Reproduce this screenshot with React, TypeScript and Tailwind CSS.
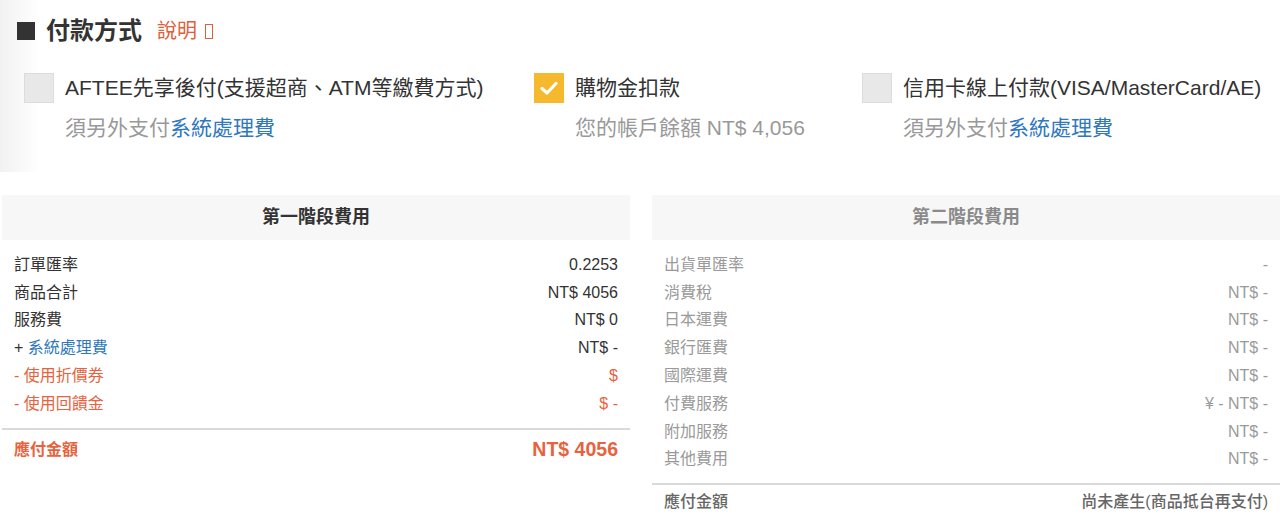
import React from "react";

const FONT = { fontFamily: '"Liberation Sans", "Noto Sans CJK TC", sans-serif' };

function Check({ checked }: { checked?: boolean }) {
  if (checked) {
    return (
      <div className="w-[30px] h-[30px] shrink-0 bg-[#f6b82c] flex items-center justify-center">
        <svg width="20" height="16" viewBox="0 0 20 16">
          <polyline points="3,8.5 8,13 17,3.5" fill="none" stroke="#ffffff" strokeWidth="3.2" strokeLinecap="round" strokeLinejoin="round" />
        </svg>
      </div>
    );
  }
  return <div className="w-[30px] h-[30px] shrink-0 bg-[#e8e8e8] border border-[#dcdcdc]" />;
}

function Option({ checked, label, sub }: { checked?: boolean; label: string; sub: React.ReactNode }) {
  return (
    <div className="flex items-start gap-[11px]">
      <Check checked={checked} />
      <div className="flex flex-col">
        <div className="text-[21px] leading-[30px] text-[#333] whitespace-nowrap">{label}</div>
        <div className="mt-[10px] text-[21px] leading-[30px] text-[#999] whitespace-nowrap">{sub}</div>
      </div>
    </div>
  );
}

type Row = { label: React.ReactNode; value: string; cls?: string };

function Panel({
  title,
  titleCls,
  rows,
  labelCls,
  total,
  lineGap,
}: {
  title: string;
  titleCls: string;
  rows: Row[];
  labelCls: string;
  total: React.ReactNode;
  lineGap: string;
}) {
  return (
    <div className="flex flex-col w-[628px]">
      <div className={`h-[45px] bg-[#f7f7f7] flex items-center justify-center text-[18px] font-bold ${titleCls}`}>{title}</div>
      <div className="pt-[11px] px-[12px]">
        {rows.map((r, i) => (
          <div key={i} className={`flex justify-between h-[27.8px] items-center text-[16px] ${r.cls ?? labelCls}`}>
            <span>{r.label}</span>
            <span>{r.value}</span>
          </div>
        ))}
      </div>
      <div className={`${lineGap} border-t-2 border-[#dadada]`} />
      {total}
    </div>
  );
}

export default function App() {
  const left: Row[] = [
    { label: "訂單匯率", value: "0.2253" },
    { label: "商品合計", value: "NT$ 4056" },
    { label: "服務費", value: "NT$ 0" },
    {
      label: (
        <span>
          + <span className="text-[#2f78bd]">系統處理費</span>
        </span>
      ),
      value: "NT$ -",
    },
    { label: "- 使用折價券", value: "$", cls: "text-[#e8623d]" },
    { label: "- 使用回饋金", value: "$ -", cls: "text-[#e8623d]" },
  ];
  const right: Row[] = [
    { label: "出貨單匯率", value: "-" },
    { label: "消費稅", value: "NT$ -" },
    { label: "日本運費", value: "NT$ -" },
    { label: "銀行匯費", value: "NT$ -" },
    { label: "國際運費", value: "NT$ -" },
    { label: "付費服務", value: "¥ - NT$ -" },
    { label: "附加服務", value: "NT$ -" },
    { label: "其他費用", value: "NT$ -" },
  ];

  return (
    <div className="w-[1280px] h-[514px] bg-white overflow-hidden" style={FONT}>
      <div className="h-[172px] pt-[15px] px-[17px] bg-[linear-gradient(to_right,#f1f1f1,#ffffff_40px)]">
        <div className="flex items-center h-[32px]">
          <div className="w-[18px] h-[18px] bg-[#333]" />
          <div className="ml-[11px] text-[24px] font-bold text-[#333] leading-[32px]">付款方式</div>
          <div className="ml-[15px] text-[20px] text-[#e0603c] leading-[32px] flex items-center">
            說明
            <span className="ml-[8px] inline-block w-[8px] h-[15px] border border-[#e0603c]" />
          </div>
        </div>
        <div className="mt-[26px] ml-[7px] grid grid-cols-[510px_328px_1fr]">
          <Option
            label="AFTEE先享後付(支援超商、ATM等繳費方式)"
            sub={
              <>
                須另外支付<span className="text-[#2f78bd]">系統處理費</span>
              </>
            }
          />
          <Option checked label="購物金扣款" sub="您的帳戶餘額 NT$ 4,056" />
          <Option
            label="信用卡線上付款(VISA/MasterCard/AE)"
            sub={
              <>
                須另外支付<span className="text-[#2f78bd]">系統處理費</span>
              </>
            }
          />
        </div>
      </div>
      <div className="mt-[23px] ml-[2px] flex gap-[22px]">
        <Panel
          title="第一階段費用"
          titleCls="text-[#333]"
          rows={left}
          labelCls="text-[#333]"
          lineGap="mt-[10px]"
          total={
            <div className="mt-[5px] px-[12px] h-[30px] flex items-center justify-between text-[#e8623d] font-bold">
              <span className="text-[16px]">應付金額</span>
              <span className="text-[19.5px]">NT$ 4056</span>
            </div>
          }
        />
        <Panel
          title="第二階段費用"
          titleCls="text-[#8a8a8a]"
          rows={right}
          labelCls="text-[#9a9a9a]"
          lineGap="mt-[10px]"
          total={
            <div className="mt-[3px] px-[12px] h-[28px] flex items-center justify-between text-[#666] font-medium text-[16px]">
              <span>應付金額</span>
              <span>尚未產生(商品抵台再支付)</span>
            </div>
          }
        />
      </div>
    </div>
  );
}
